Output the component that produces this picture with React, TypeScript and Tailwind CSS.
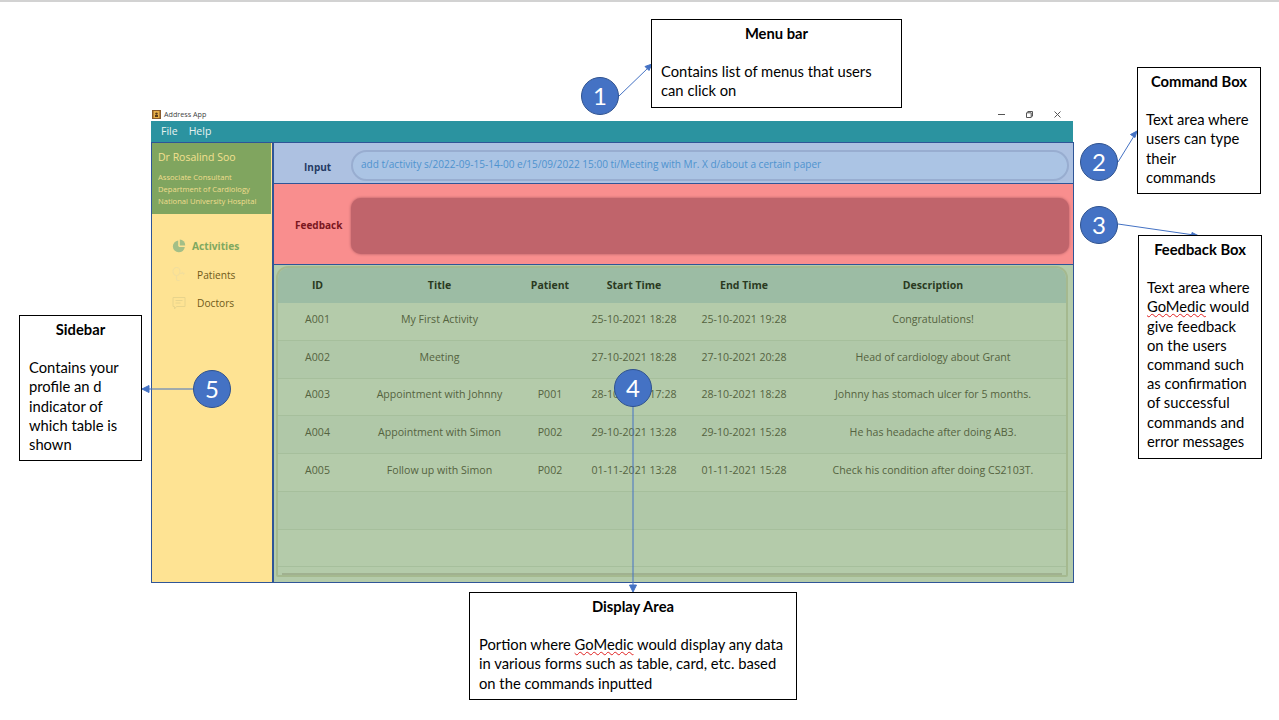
import React from 'react'

const rows = [
  ['A001', 'My First Activity', '', '25-10-2021 18:28', '25-10-2021 19:28', 'Congratulations!'],
  ['A002', 'Meeting', '', '27-10-2021 18:28', '27-10-2021 20:28', 'Head of cardiology about Grant'],
  ['A003', 'Appointment with Johnny', 'P001', '28-10-2021 17:28', '28-10-2021 18:28', 'Johnny has stomach ulcer for 5 months.'],
  ['A004', 'Appointment with Simon', 'P002', '29-10-2021 13:28', '29-10-2021 15:28', 'He has headache after doing AB3.'],
  ['A005', 'Follow up with Simon', 'P002', '01-11-2021 13:28', '01-11-2021 15:28', 'Check his condition after doing CS2103T.'],
  ['', '', '', '', '', ''],
  ['', '', '', '', '', ''],
]
const headers = ['ID', 'Title', 'Patient', 'Start Time', 'End Time', 'Description']
const cols = 'grid grid-cols-[81px_163px_58px_110px_110px_268px] items-center text-center'

function GoMedic() {
  return <span className="underline decoration-wavy decoration-[#e02020] decoration-1 underline-offset-1">GoMedic</span>
}

function Callout({ className, inset, title, children }: { className: string; inset: string; title: string; children: React.ReactNode }) {
  return (
    <div className={`absolute border border-black bg-white font-['Lato',sans-serif] text-[14.75px] leading-[19.2px] text-black pt-[4px] ${className}`}>
      <div className="text-center font-bold mb-[19px]">{title}</div>
      <div className={inset}>{children}</div>
    </div>
  )
}

function Badge({ n, className }: { n: number; className: string }) {
  return (
    <div className={`absolute w-[38px] h-[38px] rounded-full bg-[#4472c4] border border-[#2f528f] flex items-center justify-center text-white text-[24px] font-['Lato',sans-serif] ${className}`}>
      {n}
    </div>
  )
}

export default function App() {
  return (
    <div className="relative w-[1279px] h-[720px] bg-white overflow-hidden font-['Open_Sans',sans-serif]">
      <div className="h-[2px] bg-[#d2d2d2]" />

      {/* app window */}
      <div className="absolute left-[151px] top-[107px] w-[923px] h-[476px] flex flex-col">
        <div className="h-[14px] flex items-center pl-[1px] pt-[1px] text-[7.2px] text-[#444]">
          <svg width="9" height="9" viewBox="0 0 9 9">
            <rect width="9" height="9" fill="#8a5a2b" />
            <rect x="1.500" y="1" width="6" height="7" fill="#e8b04a" />
            <circle cx="4.500" cy="3.600" r="1.200" fill="#5a3a1a" />
            <rect x="3" y="5" width="3" height="2" fill="#5a3a1a" />
          </svg>
          <span className="ml-[3px]">Address App</span>
          <div className="ml-auto flex items-center gap-[21px] mr-[13px]">
            <svg width="7" height="7" viewBox="0 0 7 7"><path d="M0 3.500h7" stroke="#555" strokeWidth="1" /></svg>
            <svg width="7" height="7" viewBox="0 0 7 7" fill="none"><path d="M.5 1.800h4.700v4.700H.5zM1.800 1.800V.5h4.700v4.700H5.200" stroke="#555" strokeWidth="1" /></svg>
            <svg width="7" height="7" viewBox="0 0 7 7"><path d="M.5.5l6 6M6.500.5l-6 6" stroke="#555" strokeWidth="1" /></svg>
          </div>
        </div>
        <div className="h-[21px] w-[922px] bg-[#2b93a0] flex items-center gap-[11px] pl-[10px] pt-[1px] text-[10.5px] text-[#e8f2f0]">
          <span>File</span>
          <span>Help</span>
        </div>
        <div className="flex-1 flex min-h-0">
          {/* sidebar */}
          <div className="w-[123px] bg-[#fee393] border border-[#2f5597] border-r-2 flex flex-col">
            <div className="h-[71px] bg-[#80a55f] w-[119px] pl-[6px] pt-[7px] text-[#f3e08f]">
              <div className="text-[10.5px] leading-[15px]">Dr Rosalind Soo</div>
              <div className="mt-[6px] text-[7.6px] leading-[12px] text-[#f0dd8e]">
                <div>Associate Consultant</div>
                <div>Department of Cardiology</div>
                <div>National University Hospital</div>
              </div>
            </div>
            <div className="pl-[20px] pt-[23px] flex flex-col">
              <div className="flex items-center h-[20px] gap-[6px] text-[10.2px] font-bold text-[#7fa860]">
                <svg width="14" height="14" viewBox="0 0 14 14" className="-mt-[2px]">
                  <path d="M6.200 1.400A6 6 0 1 0 12.800 8H7.200L6.200 7z" fill="#a3bf87" />
                  <path d="M7.800 .4a6 6 0 0 1 5.400 6H7.800z" fill="#a3bf87" />
                </svg>
                <span>Activities</span>
              </div>
              <div className="flex items-center h-[20px] mt-[8.500px] gap-[11px] text-[10.2px] text-[#6f5a1a]">
                <svg width="14" height="14" viewBox="0 0 14 14" fill="none" stroke="#f2de9c" strokeWidth="1.200" className="-mt-[3px]">
                  <ellipse cx="4.500" cy="4.500" rx="3.500" ry="4" />
                  <path d="M4.500 8.500v3.500a1.500 1.500 0 0 0 1.500 1.500h1.500M8 6.500h1.500l1-1 1 1.500 1-1" />
                </svg>
                <span>Patients</span>
              </div>
              <div className="flex items-center h-[20px] mt-[8.500px] gap-[11px] text-[10.2px] text-[#6f5a1a]">
                <svg width="14" height="14" viewBox="0 0 14 14" fill="none" stroke="#e8d48c" strokeWidth="1" className="-mt-[3px]">
                  <path d="M1 1.500h12v9H4.500L2.500 13v-2.500H1z" />
                  <path d="M3.500 4.500h7M3.500 7h5" />
                </svg>
                <span>Doctors</span>
              </div>
            </div>
          </div>

          {/* main column */}
          <div className="flex-1 flex flex-col min-w-0">
            <div className="h-[42px] bg-[#adc1e1] border border-l-0 border-[#2f5597] flex items-center pl-[30px] pr-[4px] pt-[6px] pb-[2px]">
              <span className="shrink-0 mt-[4px] text-[10px] font-bold text-[#243a63] w-[47px]">Input</span>
              <div className="flex-1 h-[31px] rounded-full bg-[#abc4e4] border-2 border-[#98add0] flex items-center pl-[8px] text-[10.05px] text-[#4e93cf]">
                add t/activity s/2022-09-15-14-00 e/15/09/2022 15:00 ti/Meeting with Mr. X d/about a certain paper
              </div>
            </div>
            <div className="h-[81px] bg-[#f98e8e] border border-t-0 border-l-0 border-[#2f5597] flex items-center pl-[21px] pr-[4px] pt-[3px]">
              <span className="shrink-0 text-[10px] font-bold text-[#7a1620] w-[56px]">Feedback</span>
              <div className="flex-1 h-[56px] rounded-[10px] bg-[#c0646b] shadow-[0_0_3px_#a9565e]" />
            </div>
            <div className="flex-1 bg-[#b4cbaa] border border-t-0 border-l-0 border-[#2f5597] pl-[2px] pr-[5px] pt-[1px] min-h-0">
              <div className="h-[311px] rounded-[12px] rounded-b-[2px] border-2 border-[#a5b98f] overflow-hidden flex flex-col">
                <div className={`${cols} -ml-[1px] h-[35px] shrink-0 bg-[#9cbca4] text-[10.5px] font-bold text-[#2a3a1f]`}>
                  {headers.map(h => <div key={h}>{h}</div>)}
                </div>
                {rows.map((row, i) => (
                  <div
                    key={i}
                    className={`${cols} -ml-[1px] h-[37.750px] shrink-0 border-b border-[#a6bf9c] pb-[3px] text-[10.6px] text-[#556340] ${i % 2 === 1 ? 'bg-[#b0c8a8]' : 'bg-[#b4cbaa]'}`}
                  >
                    {row.map((c, j) => <div key={j}>{c}</div>)}
                  </div>
                ))}
                <div className="h-[2px] mt-[6px] mx-[4px] bg-[#a0b190] shrink-0" />
              </div>
            </div>
          </div>
        </div>
      </div>

      {/* arrows between the notes and the window */}
      <svg className="absolute left-0 top-0" width="1279" height="720" fill="#4472c4" stroke="#4472c4">
        <path d="M619 96L648 68" strokeWidth="1" />
        <path d="M652 64l-7 2.500 4 4z" />
        <path d="M1118 162L1134 136" strokeWidth="1" />
        <path d="M1137 131l-6.500 3.500 4.500 3z" />
        <path d="M1118 224L1194 235" strokeWidth="1" />
        <path d="M1199 236l-7-3.500-.8 6z" />
        <path d="M633 406V587" strokeWidth="1" />
        <path d="M633 592l-3.500-7h7z" />
        <path d="M193 389H147" strokeWidth="1" />
        <path d="M142 389l7-3.500v7z" />
      </svg>

      <Badge n={1} className="left-[581px] top-[77px]" />
      <Badge n={2} className="left-[1080px] top-[143px]" />
      <Badge n={3} className="left-[1080px] top-[206px]" />
      <Badge n={4} className="left-[614px] top-[369px]" />
      <Badge n={5} className="left-[193px] top-[370px]" />

      <Callout className="left-[651px] top-[19px] w-[251px] h-[89px]" inset="pl-[9px]" title="Menu bar">
        <div>Contains list of menus that users</div>
        <div>can click on</div>
      </Callout>
      <Callout className="left-[1137px] top-[67px] w-[124px] h-[127px]" inset="pl-[8px]" title="Command Box">
        <div>Text area where</div>
        <div>users can type</div>
        <div>their</div>
        <div>commands</div>
      </Callout>
      <Callout className="left-[1138px] top-[235px] w-[124px] h-[224px]" inset="pl-[8px]" title="Feedback Box">
        <div>Text area where</div>
        <div><GoMedic /> would</div>
        <div>give feedback</div>
        <div>on the users</div>
        <div>command such</div>
        <div>as confirmation</div>
        <div>of successful</div>
        <div>commands and</div>
        <div>error messages</div>
      </Callout>
      <Callout className="left-[19px] top-[315px] w-[123px] h-[146px]" inset="pl-[9px]" title="Sidebar">
        <div>Contains your</div>
        <div>profile an d</div>
        <div>indicator of</div>
        <div>which table is</div>
        <div>shown</div>
      </Callout>
      <Callout className="left-[469px] top-[592px] w-[328px] h-[108px]" inset="pl-[9px]" title="Display Area">
        <div>Portion where <GoMedic /> would display any data</div>
        <div>in various forms such as table, card, etc. based</div>
        <div>on the commands inputted</div>
      </Callout>
    </div>
  )
}
